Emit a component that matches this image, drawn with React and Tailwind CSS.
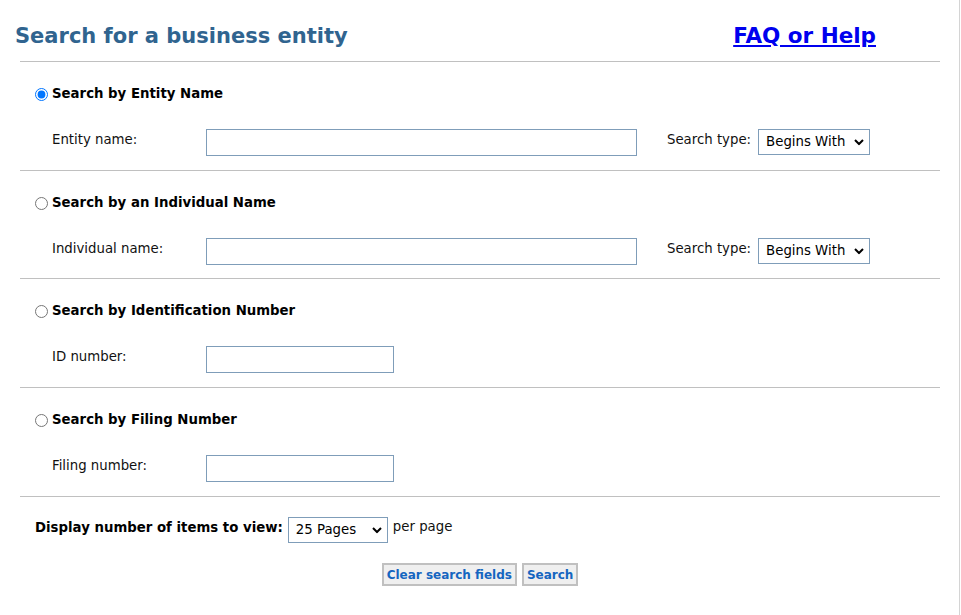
import { useState } from "react";

function Chevron() {
  return (
    <svg
      className="pointer-events-none absolute right-[6px] top-1/2 -translate-y-1/2"
      width="10"
      height="7"
      viewBox="0 0 10 7"
    >
      <path d="M1 1.5 L5 5.5 L9 1.5" fill="none" stroke="#000" strokeWidth="2" />
    </svg>
  );
}

function DropSelect({ width, options }) {
  return (
    <div className="relative" style={{ width }}>
      <select className="h-[26px] w-full appearance-none border border-[#7f9db9] bg-white pl-[7px] text-[13.3px] text-black outline-none">
        {options.map((o) => (
          <option key={o}>{o}</option>
        ))}
      </select>
      <Chevron />
    </div>
  );
}

const typeOptions = ["Begins With", "Contains", "Exact Match"];

function Section({ id, title, label, inputWidth, withType, checked, onPick, tight }) {
  return (
    <div
      className={
        tight
          ? "border-t border-[#c0c0c0] pt-[24px] pb-[13px]"
          : "border-t border-[#c0c0c0] pt-[24px] pb-[14px]"
      }
    >
      <label className="flex h-[16px] items-center pl-[15px]">
        <input
          type="radio"
          name="searchBy"
          checked={checked}
          onChange={() => onPick(id)}
          className="m-0 h-[13px] w-[13px]"
        />
        <span className="ml-[4px] text-[13.3px] font-bold text-black">{title}</span>
      </label>
      <div className="mt-[27px] flex items-start pl-[32px]">
        <div className="w-[154px] pt-[1px] text-[13.3px] text-[#111]">{label}</div>
        <input
          type="text"
          className="h-[27px] border border-[#7f9db9] bg-white px-1 text-[13px] outline-none"
          style={{ width: inputWidth }}
        />
        {withType && (
          <div className="ml-[30px] flex items-start">
            <div className="pt-[1px] text-[13.3px] text-[#111]">Search type:</div>
            <div className="ml-[7px]">
              <DropSelect width={112} options={typeOptions} />
            </div>
          </div>
        )}
      </div>
    </div>
  );
}

export default function App() {
  const [pick, setPick] = useState("entity");

  return (
    <div
      className="min-h-[615px] w-[960px] border-r border-[#d4d4d4] bg-white"
      style={{ fontFamily: '"DejaVu Sans", Verdana, sans-serif' }}
    >
      <div className="flex h-[61px] items-start pt-[22px]">
        <h1 className="ml-[15px] text-[21px] font-bold leading-[28px] text-[#30648f]">
          Search for a business entity
        </h1>
        <a
          href="#"
          className="ml-auto mr-[83px] text-[21.5px] font-bold leading-[28px] text-[#0000ee] underline"
        >
          FAQ or Help
        </a>
      </div>

      <div className="ml-[20px] w-[920px]">
        <Section
          id="entity"
          title="Search by Entity Name"
          label="Entity name:"
          inputWidth={431}
          withType
          checked={pick === "entity"}
          onPick={setPick}
        />
        <Section
          id="individual"
          title="Search by an Individual Name"
          label="Individual name:"
          inputWidth={431}
          withType
          tight
          checked={pick === "individual"}
          onPick={setPick}
        />
        <Section
          id="idnum"
          title="Search by Identification Number"
          label="ID number:"
          inputWidth={188}
          checked={pick === "idnum"}
          onPick={setPick}
        />
        <Section
          id="filing"
          title="Search by Filing Number"
          label="Filing number:"
          inputWidth={188}
          checked={pick === "filing"}
          onPick={setPick}
        />

        <div className="border-t border-[#c0c0c0] pt-[20px] pb-[28px]">
          <div className="flex items-start pl-[15px]">
            <span className="pt-[1px] text-[13.3px] font-bold text-black">
              Display number of items to view:
            </span>
            <div className="ml-[5px]">
              <DropSelect width={100} options={["25 Pages", "50 Pages", "100 Pages"]} />
            </div>
            <span className="ml-[5px] text-[13.3px] text-[#111]">per page</span>
          </div>
          <div className="mt-[20px] flex justify-center gap-[5px]">
            <button className="h-[23px] border-2 border-[#c0c0c0] bg-[#efefef] px-[3px] text-[12px] font-bold text-[#1565c0]">
              Clear search fields
            </button>
            <button className="h-[23px] border-2 border-[#c0c0c0] bg-[#efefef] px-[3px] text-[12px] font-bold text-[#1565c0]">
              Search
            </button>
          </div>
        </div>
      </div>
    </div>
  );
}
